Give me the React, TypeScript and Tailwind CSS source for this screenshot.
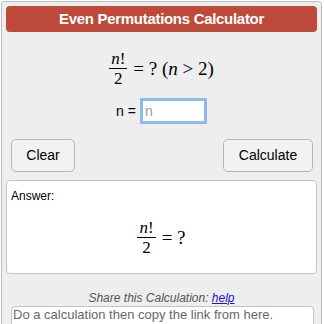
const serif = { fontFamily: '"Liberation Serif", "Times New Roman", serif' }

function Fraction() {
  return (
    <span className="inline-flex flex-col items-center text-[17px]">
      <span className="h-[15px] px-[2px] leading-[15px]">
        <i>n</i>!
      </span>
      <span className="mt-[2px] h-px w-full bg-black" />
      <span className="mt-[2px] h-[15px] px-[2px] leading-[15px]">2</span>
    </span>
  )
}

export default function App() {
  return (
    <div className="min-h-screen bg-white font-['Liberation_Sans',Arial,sans-serif]">
      <div className="ml-[1px] mt-[1px] w-[321px] h-[340px] rounded-[3px] border border-[#bdbdbd] bg-[#eeeeee] p-[4px]">
        {/* Header */}
        <div className="flex h-[26px] items-center justify-center rounded-[4px] bg-[#bd4a3b] text-[15px] font-bold tracking-[-0.3px] text-white">
          Even Permutations Calculator
        </div>

        {/* Formula */}
        <div className="mt-[19px] flex items-center justify-center gap-[6px] text-[19px] leading-[22px] text-black" style={serif}>
          <Fraction />
          <span>
            = ? (<i>n</i> &gt; 2)
          </span>
        </div>

        {/* Input */}
        <div className="mt-[12px] flex items-center justify-center gap-[4px] text-[14px]">
          <span>n =</span>
          <input
            placeholder="n"
            className="h-[26px] w-[67px] border-[3px] border-[#8fb9ea] bg-white px-[2px] text-[14px] text-black outline-none placeholder:text-[#9a9a9a]"
          />
        </div>

        {/* Buttons */}
        <div className="mt-[15px] flex justify-between pl-[5px] pr-[4px]">
          <button className="h-[33px] w-[64px] rounded-[5px] border border-[#b5b5b5] bg-[#f2f2f2] text-[14px] text-black">
            Clear
          </button>
          <button className="h-[33px] w-[90px] rounded-[5px] border border-[#b5b5b5] bg-[#f2f2f2] text-[14px] text-black">
            Calculate
          </button>
        </div>

        {/* Answer */}
        <div className="mt-[8px] h-[94px] rounded-[4px] border border-[#c4c4c4] bg-white px-[4px] pt-[7px]">
          <div className="text-[12px] leading-[16px] text-black">Answer:</div>
          <div className="mt-[16px] flex items-center justify-center gap-[6px] text-[19px] leading-[22px]" style={serif}>
            <Fraction />
            <span>= ?</span>
          </div>
        </div>

        {/* Share */}
        <div className="mt-[16px] text-center text-[12px] leading-[16px] italic text-[#555555]">
          Share this Calculation:{' '}
          <a href="#" className="text-[#2211cc] underline">
            help
          </a>
        </div>
        <div className="ml-[5px] mr-[3px] h-[40px] rounded-[4px] border border-[#c4c4c4] bg-white px-[1px] text-[13px] leading-[16px] text-[#666666]">
          Do a calculation then copy the link from here.
        </div>
      </div>
    </div>
  )
}
